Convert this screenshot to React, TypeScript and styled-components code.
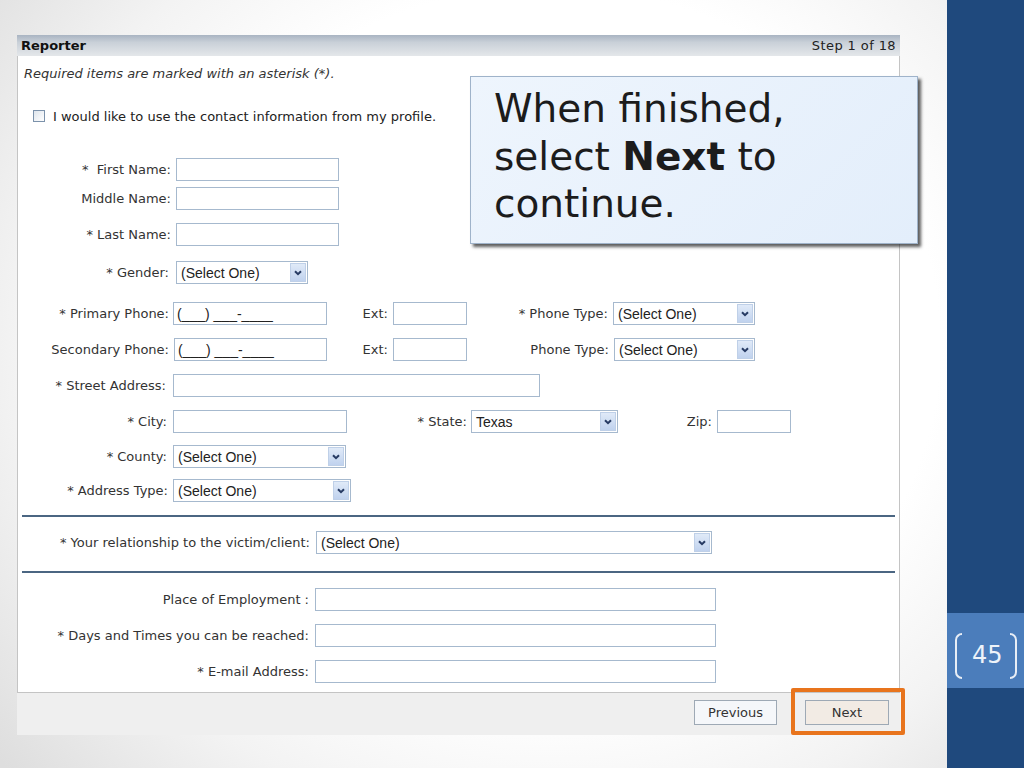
import React from "react";
import styled, { createGlobalStyle } from "styled-components";

const GlobalStyle = createGlobalStyle`
  html, body { margin: 0; padding: 0; }
  body { width: 1024px; height: 768px; overflow: hidden; font-family: "DejaVu Sans", Verdana, sans-serif; }
  * { box-sizing: border-box; }
`;

const Slide = styled.div`
  width: 1024px;
  height: 768px;
  display: flex;
`;

const Stage = styled.div`
  position: relative;
  flex: 1;
  padding: 35px 0 0 17px;
  background: radial-gradient(ellipse 75% 85% at 58% 45%, #ffffff 55%, #f3f3f3 75%, #dedede 100%);
`;

const Panel = styled.div`
  width: 883px;
  display: flex;
  flex-direction: column;
`;

const PanelHeader = styled.div`
  height: 21px;
  display: flex;
  align-items: center;
  justify-content: space-between;
  padding: 0 4px 0 4px;
  background: linear-gradient(#a9b4c2 0%, #c9d0d8 35%, #e4e7ea 100%);
  font-size: 13px;
  color: #222;
`;

const HeaderTitle = styled.span`
  font-weight: bold;
  color: #111;
`;

const StepText = styled.span`
  letter-spacing: 0.4px;
`;

const PanelBody = styled.div`
  height: 637px;
  background: #ffffff;
  border: 1px solid #c4c4c4;
  border-top: none;
  display: flex;
  flex-direction: column;
  font-size: 13px;
  color: #333;
`;

const Note = styled.div`
  margin-top: 10px;
  padding-left: 6px;
  line-height: 16px;
  font-style: italic;
  color: #333;
`;

const CheckRow = styled.label`
  margin-top: 26px;
  padding-left: 15px;
  height: 16px;
  display: flex;
  align-items: center;
  gap: 8px;
  color: #222;
`;

const CheckBox = styled.span`
  width: 12px;
  height: 12px;
  border: 1px solid #7c92ab;
  background: linear-gradient(135deg, #dfe5ec, #ffffff);
`;

const Row = styled.div<{ $mt: number }>`
  margin-top: ${(p) => p.$mt}px;
  height: 23px;
  display: flex;
  align-items: center;
`;

const Label = styled.span<{ $w: number; $gap?: number }>`
  flex: none;
  width: ${(p) => p.$w}px;
  margin-right: ${(p) => p.$gap ?? 5}px;
  text-align: right;
  white-space: nowrap;
  color: #333;
`;

const TextInput = styled.input<{ $w: number }>`
  flex: none;
  width: ${(p) => p.$w}px;
  height: 23px;
  margin: 0;
  padding: 0 3px;
  border: 1px solid #a6b9ce;
  background: #fff;
  font-family: "Liberation Sans", Arial, sans-serif;
  font-size: 14px;
  color: #222;
  outline: none;
`;

const SelectBox = styled.div<{ $w: number }>`
  flex: none;
  width: ${(p) => p.$w}px;
  height: 23px;
  border: 1px solid #a6b9ce;
  background: #fff;
  display: flex;
  align-items: center;
  padding: 0 1px 0 4px;
`;

const SelectValue = styled.span`
  flex: 1;
  font-family: "Liberation Sans", Arial, sans-serif;
  font-size: 14px;
  color: #222;
  white-space: nowrap;
`;

const SelectArrow = styled.span`
  width: 16px;
  height: 19px;
  display: flex;
  align-items: center;
  justify-content: center;
  border: 1px solid #bfd0e8;
  background: linear-gradient(#e0eaf8, #c0d2ee);
`;

const Divider = styled.div<{ $mt: number }>`
  margin: ${(p) => p.$mt}px 4px 0 4px;
  height: 2px;
  background: #4b6682;
`;

const PanelFooter = styled.div`
  height: 42px;
  background: #efefef;
  display: flex;
  justify-content: flex-end;
  align-items: flex-start;
  gap: 28px;
  padding: 7px 11px 0 0;
`;

const FooterButton = styled.button<{ $next?: boolean }>`
  height: 25px;
  width: ${(p) => (p.$next ? 84 : 83)}px;
  margin: 0;
  padding: 0;
  border: 1px solid #9ea9b5;
  background: ${(p) => (p.$next ? "#f2ebe4" : "#f5f7fa")};
  font-family: "DejaVu Sans", Verdana, sans-serif;
  font-size: 13px;
  color: #333;
`;

const NextWrap = styled.div`
  position: relative;
  display: flex;
`;

const Highlight = styled.div`
  position: absolute;
  left: -14px;
  right: -16px;
  top: -12px;
  bottom: -10px;
  border: 4px solid #e8741d;
  border-radius: 2px;
  pointer-events: none;
`;

const Callout = styled.div`
  position: absolute;
  left: 470px;
  top: 76px;
  width: 448px;
  height: 168px;
  padding: 8px 0 0 23px;
  background: linear-gradient(135deg, #eef5fd, #e3eefb);
  border: 1px solid #9fb3ca;
  box-shadow: 3px 3px 3px rgba(40, 40, 40, 0.75);
  font-family: "DejaVu Sans", Verdana, sans-serif;
  font-size: 39px;
  line-height: 47.5px;
  color: #1c1c1c;
`;

const SideBar = styled.div`
  width: 77px;
  background: #1f497d;
  display: flex;
  flex-direction: column;
`;

const PageNumber = styled.div`
  margin-top: 613px;
  height: 75px;
  background: #4b7dbb;
  display: flex;
  align-items: center;
  padding: 0 0 0 8px;
  color: #eef3f9;
`;

const Bracket = styled.span<{ $right?: boolean }>`
  width: 7px;
  height: 46px;
  margin-top: 10px;
  border: 2px solid #e8eef6;
  ${(p) =>
    p.$right
      ? "border-left: none; border-radius: 0 7px 7px 0;"
      : "border-right: none; border-radius: 7px 0 0 7px;"}
`;

const PageText = styled.span`
  margin: 8px 7px 0 10px;
  font-family: "DejaVu Sans", Verdana, sans-serif;
  font-size: 24px;
  line-height: 1;
`;

const Chevron = () => (
  <svg width="8" height="6" viewBox="0 0 8 6">
    <path d="M1 1.2 L4 4.2 L7 1.2" fill="none" stroke="#263a63" strokeWidth="2" />
  </svg>
);

const Select: React.FC<{ w: number; value?: string }> = ({ w, value = "(Select One)" }) => (
  <SelectBox $w={w}>
    <SelectValue>{value}</SelectValue>
    <SelectArrow>
      <Chevron />
    </SelectArrow>
  </SelectBox>
);

const phoneMask = "(___) ___-____";

export default function App() {
  return (
    <>
      <GlobalStyle />
      <Slide>
        <Stage>
          <Panel>
            <PanelHeader>
              <HeaderTitle>Reporter</HeaderTitle>
              <StepText>Step 1 of 18</StepText>
            </PanelHeader>
            <PanelBody>
              <Note>Required items are marked with an asterisk (*).</Note>
              <CheckRow>
                <CheckBox />
                <span>I would like to use the contact information from my profile.</span>
              </CheckRow>

              <Row $mt={34}>
                <Label $w={153}>*&nbsp;&nbsp;First Name:</Label>
                <TextInput $w={163} readOnly />
              </Row>
              <Row $mt={6}>
                <Label $w={153}>Middle Name:</Label>
                <TextInput $w={163} readOnly />
              </Row>
              <Row $mt={13}>
                <Label $w={153}>* Last Name:</Label>
                <TextInput $w={163} readOnly />
              </Row>
              <Row $mt={15}>
                <Label $w={151} $gap={7}>* Gender:</Label>
                <Select w={132} />
              </Row>
              <Row $mt={18}>
                <Label $w={151} $gap={4}>* Primary Phone:</Label>
                <TextInput $w={154} readOnly value={phoneMask} />
                <Label $w={61}>Ext:</Label>
                <TextInput $w={74} readOnly />
                <Label $w={141}>* Phone Type:</Label>
                <Select w={142} />
              </Row>
              <Row $mt={13}>
                <Label $w={151} $gap={5}>Secondary Phone:</Label>
                <TextInput $w={153} readOnly value={phoneMask} />
                <Label $w={61}>Ext:</Label>
                <TextInput $w={74} readOnly />
                <Label $w={142}>Phone Type:</Label>
                <Select w={141} />
              </Row>
              <Row $mt={13}>
                <Label $w={148} $gap={7}>* Street Address:</Label>
                <TextInput $w={367} readOnly />
              </Row>
              <Row $mt={13}>
                <Label $w={149} $gap={6}>* City:</Label>
                <TextInput $w={174} readOnly />
                <Label $w={120} $gap={4}>* State:</Label>
                <Select w={147} value="Texas" />
                <Label $w={94}>Zip:</Label>
                <TextInput $w={74} readOnly />
              </Row>
              <Row $mt={12}>
                <Label $w={149} $gap={6}>* County:</Label>
                <Select w={173} />
              </Row>
              <Row $mt={11}>
                <Label $w={150} $gap={5}>* Address Type:</Label>
                <Select w={178} />
              </Row>

              <Divider $mt={13} />
              <Row $mt={14}>
                <Label $w={292} $gap={6}>* Your relationship to the victim/client:</Label>
                <Select w={396} />
              </Row>
              <Divider $mt={17} />

              <Row $mt={15}>
                <Label $w={291} $gap={6}>Place of Employment :</Label>
                <TextInput $w={401} readOnly />
              </Row>
              <Row $mt={13}>
                <Label $w={291} $gap={6}>* Days and Times you can be reached:</Label>
                <TextInput $w={401} readOnly />
              </Row>
              <Row $mt={13}>
                <Label $w={291} $gap={6}>* E-mail Address:</Label>
                <TextInput $w={401} readOnly />
              </Row>
            </PanelBody>
            <PanelFooter>
              <FooterButton>Previous</FooterButton>
              <NextWrap>
                <FooterButton $next>Next</FooterButton>
                <Highlight />
              </NextWrap>
            </PanelFooter>
          </Panel>

          <Callout>
            When finished,
            <br />
            select <b>Next</b> to
            <br />
            continue.
          </Callout>
        </Stage>
        <SideBar>
          <PageNumber>
            <Bracket />
            <PageText>45</PageText>
            <Bracket $right />
          </PageNumber>
        </SideBar>
      </Slide>
    </>
  );
}
